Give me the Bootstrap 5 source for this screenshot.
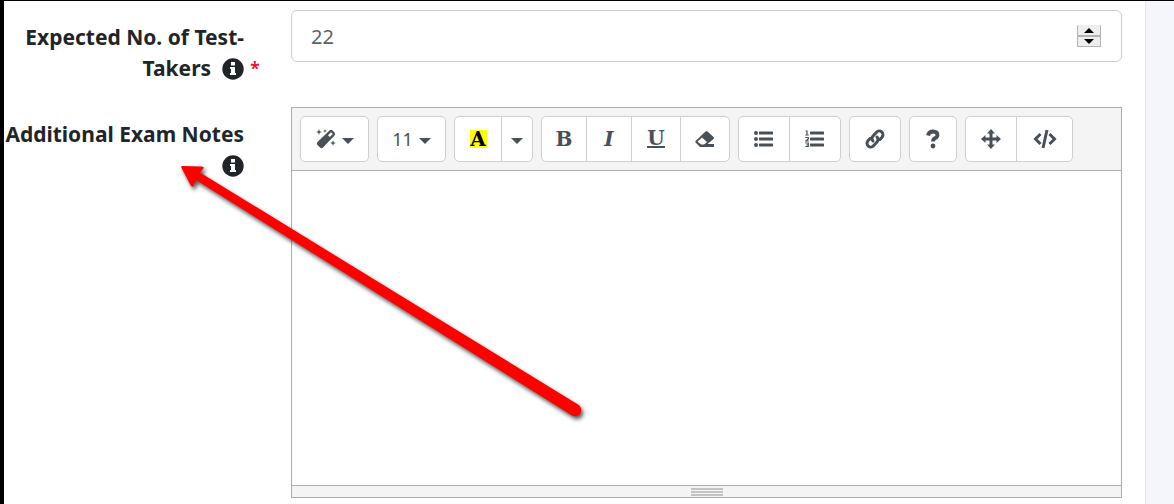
<!DOCTYPE html>
<html lang="en">
<head>
<meta charset="utf-8">
<meta name="viewport" content="width=device-width, initial-scale=1">
<title>Exam request</title>
<link href="https://cdn.jsdelivr.net/npm/bootstrap@5.3.0/dist/css/bootstrap.min.css" rel="stylesheet">
<style>
body{font-family:"Noto Sans","Open Sans",sans-serif;font-size:20px;line-height:31px;color:#212529;background:#f5f6fb}
.page{border-left:4px solid #000;border-top:1px solid #000;overflow:hidden}
.sheet{background:#fff;border-right:1px solid #e2e5ee;padding:9px 23px 7px 0;gap:23px}
.side{width:28px}
.field{gap:47px}
.caption{width:240px;padding-top:12px}
.caption label{font-weight:700;font-size:21px}
.info{width:22px;height:22px;vertical-align:-4px}
.must{left:100%;margin-left:6px;color:#e8112d;font-weight:600;font-size:18px}
.count{height:52px;border:1px solid #cdcdcd;border-radius:6px;padding:0 19px;font-size:20px;color:#5c6268;appearance:textfield;-moz-appearance:textfield}
.count::-webkit-inner-spin-button{appearance:none;-webkit-appearance:none;margin:0}
.spin{right:21px;top:15px;width:24px;height:22px}
.spin button{height:11px;border:1px solid #b4b4b4;background:#eee;padding:0}
.spin button:first-child{border-top-color:#eee}
.spin svg{width:10px;height:5px}
.editor{border:1px solid #acacac}
.tools{background:#f4f4f4;border-bottom:1px solid #acacac;padding:8px;gap:8px}
.tools .btn{height:46px;border:1px solid #cfcfcf;background:#fff;color:#495057;border-radius:5px;padding:0;gap:6px;font-size:18px;line-height:24px;flex:none}
.tools svg{display:block}
.w-s{width:32px}.w-h{width:48px}.w-m{width:46px}.w-l{width:50px}.w-x{width:52px}.w-xx{width:57px}.w-d{width:69px}
.serif{font-family:"DejaVu Serif",serif;font-size:20px;line-height:20px;font-weight:700}
.ink{background:#ff0;color:#000;width:17px;height:18px;line-height:18px;display:flex;justify-content:center}
.line{border-bottom:2px solid #495057;line-height:16px}
.notes{height:314px;border:0;resize:none;outline:0;padding:10px;color:#495057}
.grip{height:12px;background:#f4f4f4;border-top:1px solid #acacac}
.grip svg{width:32px;height:8px}
.pointer{left:0;top:0;width:620px;height:440px;pointer-events:none;filter:drop-shadow(2px 3px 2px #000a)}
</style>
</head>
<body>
<svg class="d-none" aria-hidden="true">
<symbol id="i-info" viewBox="0 0 22 22"><circle cx="11" cy="11" r="10.7" fill="#212529"/><path d="M9 4h4v3.500H9zM8 9h5v6h1v2H8v-2h1v-4H8z" fill="#fff"/></symbol>
<symbol id="i-caret" viewBox="0 0 12 6"><path d="M0 0h12L6 6z" fill="#495057"/></symbol>
</svg>
<div class="page d-flex min-vh-100 position-relative">
<main class="sheet d-flex flex-column flex-grow-1">
 <div class="field d-flex">
  <div class="caption text-end flex-shrink-0"><label for="count">Expected No. of Test-<br><span class="position-relative">Takers &nbsp;<svg class="info"><use href="#i-info"/></svg><span class="must position-absolute">*</span></span></label></div>
  <div class="position-relative flex-grow-1"><input id="count" class="count w-100" type="number" value="22">
   <div class="spin position-absolute d-flex flex-column"><button type="button" class="d-flex align-items-center justify-content-center" aria-label="Increase"><svg viewBox="0 0 10 5"><path d="M5 0l5 5H0z"/></svg></button><button type="button" class="d-flex align-items-center justify-content-center" aria-label="Decrease"><svg viewBox="0 0 10 5"><path d="M0 0h10L5 5z"/></svg></button></div>
  </div>
 </div>
 <div class="field d-flex">
  <div class="caption text-end flex-shrink-0"><label for="notes"><span class="text-nowrap">Additional Exam Notes</span><br><svg class="info"><use href="#i-info"/></svg></label></div>
  <div class="editor flex-grow-1">
   <div class="tools d-flex flex-wrap" role="toolbar" aria-label="Formatting">
    <button type="button" class="btn w-d d-flex align-items-center justify-content-center" aria-label="Style"><svg width="20" height="20" viewBox="0 0 20 20" fill="#495057"><path fill-rule="evenodd" d="M13.500 1.500q1.500-1.500 3 0l2 2q1.500 1.500 0 3L7 18.500q-1.500 1.500-3 0L1.500 16q-1.500-1.500 0-3zM15 3.200L12 6.200 13.800 8 16.800 5zM3 0l.8 2.200L6 3l-2.200.8L3 6l-.8-2.200L0 3l2.200-.8zM9 0l.5 1.500L11 2l-1.500.5L9 4l-.5-1.500L7 2l1.500-.5zM17 11l.8 2.200L20 14l-2.200.8L17 17l-.8-2.200L14 14l2.200-.8z"/></svg><svg class="mt-1" width="12" height="6"><use href="#i-caret"/></svg></button>
    <button type="button" class="btn w-d d-flex align-items-center justify-content-center" aria-label="Font size 11">11<svg class="mt-1" width="12" height="6"><use href="#i-caret"/></svg></button>
    <div class="btn-group"><button type="button" class="btn w-h d-flex align-items-center justify-content-center" aria-label="Text colour"><span class="serif ink">A</span></button><button type="button" class="btn w-s d-flex align-items-center justify-content-center" aria-label="More colours"><svg class="mt-1" width="12" height="6"><use href="#i-caret"/></svg></button></div>
    <div class="btn-group"><button type="button" class="btn w-m d-flex align-items-center justify-content-center" aria-label="Bold"><span class="serif">B</span></button><button type="button" class="btn w-m d-flex align-items-center justify-content-center" aria-label="Italic"><span class="serif fst-italic">I</span></button><button type="button" class="btn w-l d-flex align-items-center justify-content-center" aria-label="Underline"><span class="serif line">U</span></button><button type="button" class="btn w-l d-flex align-items-center justify-content-center" aria-label="Remove formatting"><svg width="20" height="18" viewBox="0 0 20 18" fill="#495057"><path fill-rule="evenodd" d="M10.500 1.500q1-1 2 0l6 5.500q1 1 0 2L12.500 14H19v3H5L.8 12.800q-1-1 0-2zM7 7.500l-4.500 4L6 14.500h3l3-2.500z"/></svg></button></div>
    <div class="btn-group"><button type="button" class="btn w-x d-flex align-items-center justify-content-center" aria-label="Bulleted list"><svg width="20" height="18" viewBox="0 0 20 18" fill="#495057"><circle cx="2" cy="3" r="2"/><circle cx="2" cy="9" r="2"/><circle cx="2" cy="15" r="2"/><rect x="5" y="1.500" width="14" height="3" rx=".6"/><rect x="5" y="7.500" width="14" height="3" rx=".6"/><rect x="5" y="13.500" width="14" height="3" rx=".6"/></svg></button><button type="button" class="btn w-x d-flex align-items-center justify-content-center" aria-label="Numbered list"><svg width="20" height="18" viewBox="0 0 20 18" fill="#495057"><path d="M.5 1h1.500v4M.3 5h3.500M.3 7.500h3v1.500l-2.500 2h3M.3 13h3v3.500h-3M1.500 14.800h2" fill="none" stroke="#495057" stroke-width="1.200"/><rect x="5" y="1.500" width="14" height="3" rx=".6"/><rect x="5" y="7.500" width="14" height="3" rx=".6"/><rect x="5" y="13.500" width="14" height="3" rx=".6"/></svg></button></div>
    <button type="button" class="btn w-x d-flex align-items-center justify-content-center" aria-label="Link"><svg width="20" height="20" viewBox="0 0 20 20" fill="none" stroke="#495057" stroke-width="3" stroke-linecap="round"><path d="M8 12a3.800 3.800 0 0 1 0-5l3.500-3.800a3.600 3.600 0 0 1 5.500 5L15 10.500M12 8a3.800 3.800 0 0 1 0 5l-3.500 3.800a3.600 3.600 0 0 1-5.500-5L5 9.500"/></svg></button>
    <button type="button" class="btn w-h d-flex align-items-center justify-content-center" aria-label="Help"><svg width="14" height="20" viewBox="0 0 14 20"><path d="M2 6.500Q3 2.500 7 2.500 11.500 2.700 11.500 6 11.500 8 9 9.300 7 10.300 7 12.500" fill="none" stroke="#495057" stroke-width="3.800"/><circle cx="7" cy="17" r="2.400" fill="#495057"/></svg></button>
    <div class="btn-group"><button type="button" class="btn w-x d-flex align-items-center justify-content-center" aria-label="Full screen"><svg width="20" height="20" viewBox="0 0 20 20" fill="#495057"><path d="M10 0l4 4.500h-2.500v4h4V6L20 10l-4.500 4v-2.500h-4v4H14L10 20l-4-4.500h2.500v-4h-4V14L0 10l4.500-4v2.500h4v-4H6z"/></svg></button><button type="button" class="btn w-xx d-flex align-items-center justify-content-center" aria-label="Code view"><svg width="24" height="20" viewBox="0 0 24 20" fill="none" stroke="#495057" stroke-width="3"><path d="M7.500 5L2.500 10l5 5M16.500 5l5 5-5 5M14 1l-4 18"/></svg></button></div>
   </div>
   <textarea id="notes" class="notes d-block w-100"></textarea>
   <div class="grip d-flex justify-content-center align-items-center"><svg viewBox="0 0 32 8"><path d="M0 1h32M0 4h32M0 7h32" stroke="#b2b2b2" stroke-width="1.400"/></svg></div>
  </div>
 </div>
</main>
<div class="side flex-shrink-0"></div>
</div>
<svg class="pointer position-absolute" viewBox="0 0 620 440" aria-hidden="true"><path d="M181 167Q181 166 183 166L202 166.500Q205 167 203 169L200 172.500 578 404.500A6 6 0 0 1 572 415.500L196 180 193.500 186Q192 188 190.500 185Z" fill="#f00"/></svg>
<script src="https://cdn.jsdelivr.net/npm/bootstrap@5.3.0/dist/js/bootstrap.bundle.min.js"></script>
</body>
</html>
